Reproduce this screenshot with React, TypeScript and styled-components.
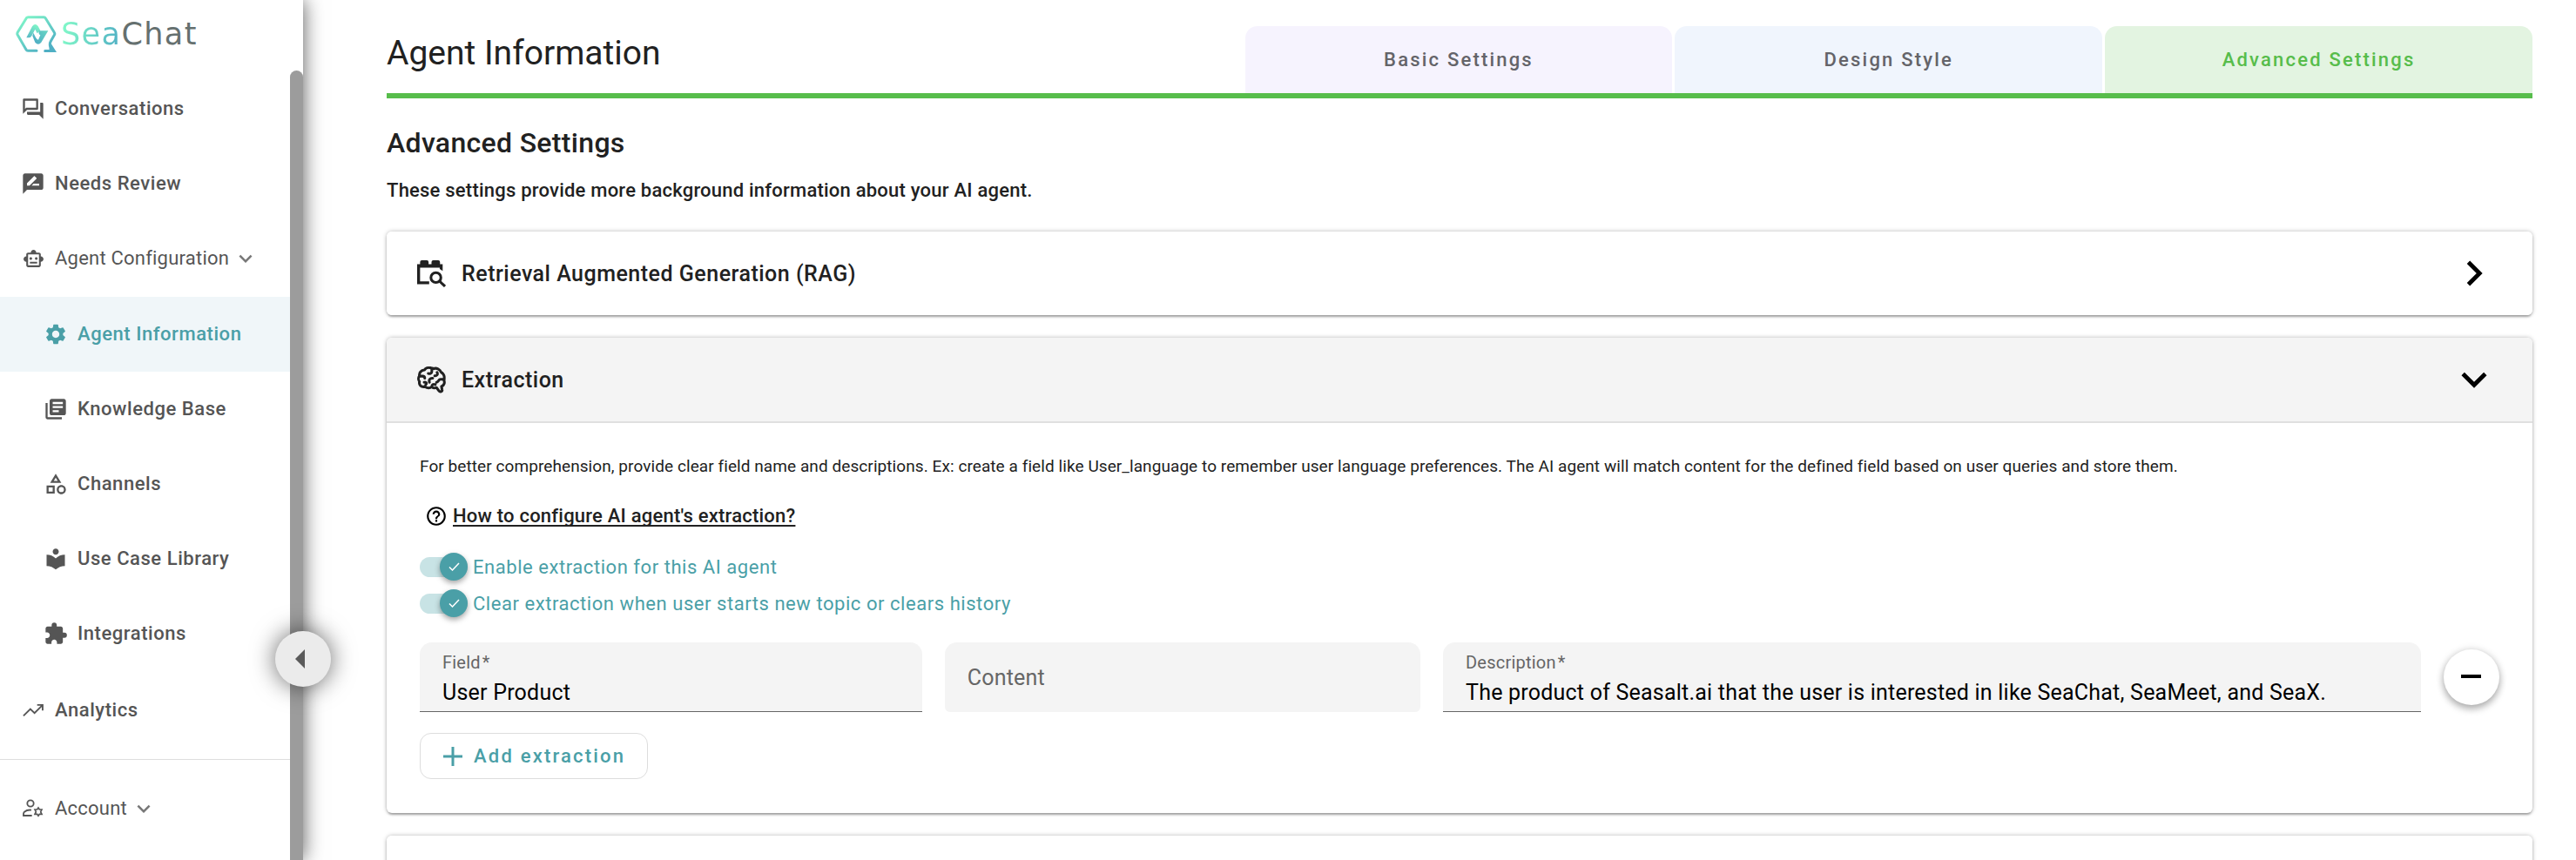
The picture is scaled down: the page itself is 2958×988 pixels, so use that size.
import React, { useState } from "react";
import styled, { createGlobalStyle, css } from "styled-components";
import {
  MdChevronRight,
  MdExpandMore,
  MdExtension,
  MdHelpOutline,
  MdLibraryBooks,
  MdLocalLibrary,
  MdOutlineCategory,
  MdOutlineForum,
  MdOutlineSmartToy,
  MdRateReview,
  MdSettings,
} from "react-icons/md";

const color = {
  text: "#212121",
  nav: "#555555",
  teal: "#4a9fa7",
  green: "#57bd4b",
  field: "#f4f4f4",
  muted: "#666666",
};

const GlobalStyle = createGlobalStyle`
  *, *::before, *::after { box-sizing: border-box; }
  body {
    margin: 0;
    background: #ffffff;
    color: ${color.text};
    font-family: Roboto, "Liberation Sans", sans-serif;
    font-size: 22px;
  }
  button, input { font: inherit; color: inherit; letter-spacing: inherit; }
  h1, h2, h3, p { margin: 0; }
  svg { display: block; flex: none; }
`;

/* ---------- shell ---------- */

const Shell = styled.div`
  display: flex;
  height: 100vh;
  overflow: hidden;
`;

const Sidebar = styled.aside`
  position: relative;
  z-index: 2;
  display: flex;
  flex-direction: column;
  flex: none;
  width: 348px;
  background: #ffffff;
  box-shadow: 0 0 22px rgba(0, 0, 0, 0.65);
`;

const Brand = styled.a`
  display: flex;
  align-items: center;
  gap: 5px;
  flex: none;
  height: 81px;
  padding: 0 18px 4px;
  text-decoration: none;
`;

const Wordmark = styled.span`
  font-family: "DejaVu Sans", sans-serif;
  font-size: 35px;
  line-height: 40px;
  letter-spacing: 0.04em;
  color: #65706f;
`;

const WordmarkTint = styled.span`
  background: linear-gradient(100deg, #7ff5c8 10%, #55b5c5 90%);
  background-clip: text;
  color: transparent;
`;

const SidebarBody = styled.div`
  display: flex;
  flex: 1;
  min-height: 0;
`;

const Nav = styled.nav`
  flex: 1;
  padding-top: 1px;
  overflow: hidden;
`;

const ScrollThumb = styled.div`
  flex: none;
  width: 15px;
  border-radius: 8px 8px 0 0;
  background: #9c9c9c;
`;

const SubMenu = styled.div`
  padding: 1px 0 2px;
`;

const navItem = css`
  display: flex;
  align-items: center;
  gap: 11px;
  width: 100%;
  height: 86px;
  border: 0;
  background: transparent;
  color: ${color.nav};
  font-size: 22px;
  line-height: 32px;
  text-decoration: none;
`;

const NavLink = styled.a<{ $nested?: boolean; $active?: boolean }>`
  ${navItem}
  padding: 0 24px 0 ${(p) => (p.$nested ? 50 : 24)}px;
  font-weight: 500;
  letter-spacing: 0.025em;
  ${(p) =>
    p.$active &&
    css`
      background: #f0f6f9;
      color: ${color.teal};
    `}
`;

const NavGroup = styled.button`
  ${navItem}
  padding: 0 24px;
  font-weight: 400;
  letter-spacing: 0.01em;
  cursor: pointer;
`;

const NavIcon = styled.span`
  display: flex;
  align-items: center;
  justify-content: center;
  flex: none;
  width: 28px;
  height: 28px;
`;

const GroupArrow = styled(MdExpandMore)`
  margin-left: -7px;
  color: #777777;
`;

const NavDivider = styled.hr`
  height: 1px;
  margin: 13px 0;
  border: 0;
  background: #dedede;
`;

const CollapseButton = styled.button`
  position: absolute;
  top: 725px;
  right: -32px;
  display: flex;
  align-items: center;
  justify-content: center;
  width: 64px;
  height: 64px;
  padding: 0 7px 0 0;
  border: 0;
  border-radius: 50%;
  background: #ebebeb;
  box-shadow: 0 0 28px rgba(0, 0, 0, 0.6);
`;

/* ---------- page ---------- */

const Main = styled.main`
  flex: 1;
  min-width: 0;
  overflow-y: auto;
  scrollbar-width: none;
  padding: 30px 50px 25px 96px;
`;

const PageHeader = styled.header`
  display: flex;
  align-items: flex-start;
  border-bottom: 6px solid ${color.green};
`;

const PageTitle = styled.h1`
  flex: 2;
  font-size: 39px;
  font-weight: 400;
  line-height: 62px;
`;

const Tabs = styled.div`
  display: flex;
  flex: 3;
  gap: 3px;
`;

const Tab = styled.button<{ $bg: string; $active?: boolean }>`
  flex: 1;
  height: 77px;
  border: 0;
  border-radius: 14px 14px 0 0;
  background: ${(p) => p.$bg};
  color: ${(p) => (p.$active ? color.green : "#646469")};
  font-weight: 500;
  letter-spacing: 0.1em;
`;

const SectionTitle = styled.h2`
  margin-top: 29px;
  font-size: 32px;
  font-weight: 500;
  line-height: 44px;
  letter-spacing: 0.01em;
`;

const SectionNote = styled.p`
  margin-top: 17px;
  font-weight: 500;
  line-height: 32px;
  letter-spacing: 0.01em;
`;

const Panels = styled.div`
  display: flex;
  flex-direction: column;
  gap: 26px;
  margin-top: 31px;
`;

const Panel = styled.section`
  border-radius: 6px;
  background: #ffffff;
  box-shadow:
    0 4px 2px -2px rgba(0, 0, 0, 0.16),
    0 2px 3px rgba(0, 0, 0, 0.14),
    0 0 5px rgba(0, 0, 0, 0.28);
`;

const PanelHeader = styled.button<{ $open?: boolean }>`
  display: flex;
  align-items: center;
  width: 100%;
  height: 96px;
  padding: 0 38px 0 35px;
  border: 0;
  border-radius: ${(p) => (p.$open ? "6px 6px 0 0" : "6px")};
  background: ${(p) => (p.$open ? color.field : "#ffffff")};
  font-size: 25px;
  font-weight: 500;
  letter-spacing: 0.02em;
  text-align: left;
`;

const PanelName = styled.span`
  flex: 1;
  margin-left: 18px;
`;

const PanelArrow = styled(MdChevronRight)<{ $open?: boolean }>`
  color: #000000;
  transform: rotate(${(p) => (p.$open ? 90 : 0)}deg);
`;

const PanelBody = styled.div`
  padding: 36px 38px 39px;
  border-top: 2px solid #e0e0e0;
`;

const Hint = styled.p`
  font-size: 19px;
  line-height: 28px;
  letter-spacing: 0.004em;
`;

const HelpRow = styled.div`
  display: flex;
  align-items: center;
  gap: 6px;
  margin: 27px 0 21px 6px;
  color: #000000;
`;

const HelpLink = styled.a`
  color: ${color.text};
  font-weight: 500;
  line-height: 32px;
  letter-spacing: 0.01em;
  text-decoration: underline;
  text-decoration-thickness: 2px;
  text-underline-offset: 3px;
  text-decoration-skip-ink: none;
`;

const ToggleLabel = styled.label`
  display: flex;
  align-items: center;
  gap: 6px;
  width: fit-content;
  height: 42px;
  color: ${color.teal};
  letter-spacing: 0.025em;
  cursor: pointer;
`;

const ToggleInput = styled.input`
  position: absolute;
  inset: 0;
  margin: 0;
  opacity: 0;
`;

const Track = styled.span<{ $on: boolean }>`
  position: relative;
  display: flex;
  align-items: center;
  justify-content: ${(p) => (p.$on ? "flex-end" : "flex-start")};
  width: 55px;
  height: 23px;
  border-radius: 12px;
  background: ${(p) => (p.$on ? "#c8e3e5" : "#cccccc")};
`;

const Thumb = styled.span<{ $on: boolean }>`
  display: flex;
  align-items: center;
  justify-content: center;
  width: 32px;
  height: 32px;
  border-radius: 50%;
  background: ${(p) => (p.$on ? color.teal : "#ffffff")};
  box-shadow: 0 3px 6px rgba(0, 0, 0, 0.35);
`;

const FieldRow = styled.div`
  display: flex;
  align-items: center;
  gap: 26px;
  margin: 24px 0;
`;

const FieldGrid = styled.div`
  display: grid;
  flex: 1;
  grid-template-columns: 19fr 18fr 37fr;
  gap: 26px;
`;

const FieldBox = styled.div<{ $filled?: boolean }>`
  display: flex;
  flex-direction: column;
  justify-content: ${(p) => (p.$filled ? "flex-start" : "center")};
  height: 80px;
  padding: ${(p) => (p.$filled ? "11px 26px 0" : "0 26px 4px")};
  border-bottom: 1px solid ${(p) => (p.$filled ? color.muted : color.field)};
  border-radius: ${(p) => (p.$filled ? "14px 14px 0 0" : "14px 14px 6px 6px")};
  background: ${color.field};
  letter-spacing: 0.01em;
`;

const FieldLabel = styled.label`
  color: ${color.muted};
  font-size: 20px;
  line-height: 24px;
`;

const Asterisk = styled.span`
  margin-left: 2px;
`;

const FieldInput = styled.input`
  width: 100%;
  height: 32px;
  margin-top: 6px;
  padding: 0;
  border: 0;
  outline: 0;
  background: transparent;
  color: #000000;
  font-size: 25px;

  &::placeholder {
    color: ${color.muted};
    opacity: 1;
  }
`;

const RemoveButton = styled.button`
  display: flex;
  align-items: center;
  justify-content: center;
  flex: none;
  width: 64px;
  height: 64px;
  padding: 0 2px 2px 0;
  border: 0;
  border-radius: 50%;
  background: #ffffff;
  box-shadow:
    0 5px 8px rgba(0, 0, 0, 0.22),
    0 1px 10px rgba(0, 0, 0, 0.2);
`;

const AddButton = styled.button`
  display: flex;
  align-items: center;
  gap: 13px;
  height: 53px;
  padding: 0 25px 0 26px;
  border: 1px solid #dddddd;
  border-radius: 13px;
  background: #ffffff;
  color: ${color.teal};
  font-weight: 500;
  letter-spacing: 0.1em;
`;

/* ---------- drawings ---------- */

const LogoMark = () => (
  <svg width="47" height="42" viewBox="54 51 141 126" fill="none">
    <defs>
      <linearGradient id="mark" x1="75" y1="60" x2="150" y2="175" gradientUnits="userSpaceOnUse">
        <stop offset="0" stopColor="#7ff5c8" />
        <stop offset="1" stopColor="#4fafc4" />
      </linearGradient>
      <linearGradient id="up" x1="125" y1="82" x2="100" y2="125" gradientUnits="userSpaceOnUse">
        <stop offset="0" stopColor="#7ff5c8" />
        <stop offset="1" stopColor="#5bbcc6" />
      </linearGradient>
      <linearGradient id="down" x1="120" y1="140" x2="160" y2="105" gradientUnits="userSpaceOnUse">
        <stop offset="0" stopColor="#4fafc4" />
        <stop offset="1" stopColor="#66d3c4" />
      </linearGradient>
    </defs>
    <path
      d="M126 172H96Q92 172 90 168L61 118Q58 113 61 108L91 59Q93 56 97 56H151Q155 56 157 60L187 109Q190 113 187 118L175 139Q172 144 172 150V154"
      stroke="url(#mark)"
      strokeWidth="9"
      strokeLinecap="round"
      strokeLinejoin="round"
    />
    <path d="M168 152L176 147L195 177H152Q149 168 155 168H170Z" fill="url(#mark)" />
    <path d="M91 127L111 88Q121 74 131 87L139 102L128 112L121 98L110 119Q106 127 98 127Z" fill="url(#up)" />
    <path d="M115 110L123 126Q127 134 132 134L139 118Q132 116 134 103H166L142 143Q132 155 121 143L112 121Z" fill="url(#down)" />
  </svg>
);

const TrendIcon = () => (
  <svg width="28" height="28" viewBox="0 0 24 24" fill="none" stroke="currentColor" strokeWidth="1.6">
    <path d="M2.5 17.5L9.3 10.8L13.4 14.8L21 7.2M16 6.8H21.4V12.2" />
  </svg>
);

const AccountIcon = () => (
  <svg width="28" height="28" viewBox="0 0 84 84" fill="none" stroke="currentColor" strokeWidth="5.5">
    <circle cx="33" cy="24" r="11" />
    <path d="M36 47Q22 45 12 53Q9 56 9 61V66H38" />
    <path d="M60 39L64 45L72 45L68 53L72 61L64 61L60 67L56 61L48 61L52 53L48 45L56 45Z" strokeWidth="5" />
  </svg>
);

const CollapseArrow = () => (
  <svg width="11" height="22" viewBox="0 0 11 22" fill="#5a5a5a">
    <path d="M11 0V22L0 11Z" />
  </svg>
);

const RetrievalIcon = () => (
  <svg width="33" height="31" viewBox="0 0 98 92" fill="none" stroke="currentColor">
    <path d="M10 16V6Q10 0 16 0H33Q39 0 39 6V16ZM49 16V6Q49 0 55 0H72Q78 0 78 6V16Z" fill="currentColor" stroke="none" />
    <path d="M0 13H87V36L77 30V25H10V72H41V82H0Z" fill="currentColor" stroke="none" />
    <circle cx="64" cy="59" r="17" strokeWidth="9" />
    <path d="M76 71L95 89" strokeWidth="9" />
  </svg>
);

const BrainIcon = () => (
  <svg
    width="33"
    height="31"
    viewBox="0 0 98 92"
    fill="none"
    stroke="currentColor"
    strokeWidth="9"
    strokeLinecap="round"
    strokeLinejoin="round"
  >
    <path d="M48 5C37 2 28 6 25 12C13 13 6 22 8 32C3 38 4 47 8 52C5 63 14 71 26 69C34 74 44 74 50 70C55 74 62 74 66 72L74 83C78 89 87 86 85 79L83 68C93 64 95 54 91 46C95 36 91 24 82 20C78 10 66 3 56 8C53 5 51 5 48 5Z" />
    <path d="M50 7V17C50 23 44 26 38 24M8 33H18C23 33 26 36 26 40M68 20C72 28 66 33 60 32M92 44H80C72 44 73 53 66 54M42 54C39 45 44 39 53 40M24 54C31 52 34 58 29 63M50 70C50 62 55 59 62 62" />
  </svg>
);

const CheckIcon = () => (
  <svg width="13" height="10" viewBox="0 0 13 10" fill="none" stroke="#ffffff" strokeWidth="1.5">
    <path d="M1 5.500L4.500 9L12 1" />
  </svg>
);

const PlusIcon = () => (
  <svg width="22" height="22" viewBox="0 0 22 22" fill="none" stroke="currentColor" strokeWidth="3">
    <path d="M11 0V22M0 11H22" />
  </svg>
);

const MinusIcon = () => (
  <svg width="23" height="4" viewBox="0 0 23 4" fill="#000000">
    <path d="M0 0H23V4H0Z" />
  </svg>
);

/* ---------- composed parts ---------- */

type ItemProps = { icon: React.ReactNode; label: string; nested?: boolean; active?: boolean };

const Item = ({ icon, label, nested, active }: ItemProps) => (
  <NavLink href="#" $nested={nested} $active={active} aria-current={active ? "page" : undefined}>
    <NavIcon>{icon}</NavIcon>
    {label}
  </NavLink>
);

const Group = ({ icon, label }: ItemProps) => (
  <NavGroup type="button">
    <NavIcon>{icon}</NavIcon>
    {label}
    <GroupArrow size={30} />
  </NavGroup>
);

const Toggle = ({ id, label }: { id: string; label: string }) => {
  const [on, setOn] = useState(true);
  return (
    <ToggleLabel htmlFor={id}>
      <Track $on={on}>
        <ToggleInput id={id} type="checkbox" checked={on} onChange={(e) => setOn(e.target.checked)} />
        <Thumb $on={on}>{on && <CheckIcon />}</Thumb>
      </Track>
      {label}
    </ToggleLabel>
  );
};

const RequiredField = ({ id, label, value }: { id: string; label: string; value: string }) => (
  <FieldBox $filled>
    <FieldLabel htmlFor={id}>
      {label}
      <Asterisk>*</Asterisk>
    </FieldLabel>
    <FieldInput id={id} type="text" defaultValue={value} required />
  </FieldBox>
);

export default function App() {
  return (
    <>
      <GlobalStyle />
      <Shell>
        <Sidebar>
          <Brand href="#">
            <LogoMark />
            <Wordmark>
              <WordmarkTint>Sea</WordmarkTint>Chat
            </Wordmark>
          </Brand>
          <SidebarBody>
            <Nav>
              <Item icon={<MdOutlineForum size={28} />} label="Conversations" />
              <Item icon={<MdRateReview size={28} />} label="Needs Review" />
              <Group icon={<MdOutlineSmartToy size={25} />} label="Agent Configuration" />
              <SubMenu>
                <Item nested active icon={<MdSettings size={28} />} label="Agent Information" />
                <Item nested icon={<MdLibraryBooks size={28} />} label="Knowledge Base" />
                <Item nested icon={<MdOutlineCategory size={28} />} label="Channels" />
                <Item nested icon={<MdLocalLibrary size={28} />} label="Use Case Library" />
                <Item nested icon={<MdExtension size={28} />} label="Integrations" />
              </SubMenu>
              <Item icon={<TrendIcon />} label="Analytics" />
              <NavDivider />
              <Group icon={<AccountIcon />} label="Account" />
            </Nav>
            <ScrollThumb />
          </SidebarBody>
          <CollapseButton type="button" aria-label="Collapse sidebar">
            <CollapseArrow />
          </CollapseButton>
        </Sidebar>

        <Main>
          <PageHeader>
            <PageTitle>Agent Information</PageTitle>
            <Tabs>
              <Tab type="button" $bg="#f6f3fe">Basic Settings</Tab>
              <Tab type="button" $bg="#f0f5fd">Design Style</Tab>
              <Tab type="button" $bg="#e3f4e1" $active>Advanced Settings</Tab>
            </Tabs>
          </PageHeader>

          <SectionTitle>Advanced Settings</SectionTitle>
          <SectionNote>These settings provide more background information about your AI agent.</SectionNote>

          <Panels>
            <Panel>
              <PanelHeader type="button" aria-expanded={false}>
                <RetrievalIcon />
                <PanelName>Retrieval Augmented Generation (RAG)</PanelName>
                <PanelArrow size={58} />
              </PanelHeader>
            </Panel>

            <Panel>
              <PanelHeader type="button" aria-expanded $open>
                <BrainIcon />
                <PanelName>Extraction</PanelName>
                <PanelArrow size={58} $open />
              </PanelHeader>
              <PanelBody>
                <Hint>
                  For better comprehension, provide clear field name and descriptions. Ex: create a field like
                  User_language to remember user language preferences. The AI agent will match content for the defined
                  field based on user queries and store them.
                </Hint>
                <HelpRow>
                  <MdHelpOutline size={26} />
                  <HelpLink href="#">How to configure AI agent's extraction?</HelpLink>
                </HelpRow>
                <Toggle id="enable-extraction" label="Enable extraction for this AI agent" />
                <Toggle id="clear-extraction" label="Clear extraction when user starts new topic or clears history" />
                <FieldRow>
                  <FieldGrid>
                    <RequiredField id="field-name" label="Field" value="User Product" />
                    <FieldBox>
                      <FieldInput type="text" placeholder="Content" aria-label="Content" />
                    </FieldBox>
                    <RequiredField
                      id="field-description"
                      label="Description"
                      value="The product of Seasalt.ai that the user is interested in like SeaChat, SeaMeet, and SeaX."
                    />
                  </FieldGrid>
                  <RemoveButton type="button" aria-label="Remove extraction">
                    <MinusIcon />
                  </RemoveButton>
                </FieldRow>
                <AddButton type="button">
                  <PlusIcon />
                  Add extraction
                </AddButton>
              </PanelBody>
            </Panel>

            <Panel>
              <PanelHeader type="button" aria-expanded={false} aria-label="Expand next section" />
            </Panel>
          </Panels>
        </Main>
      </Shell>
    </>
  );
}
